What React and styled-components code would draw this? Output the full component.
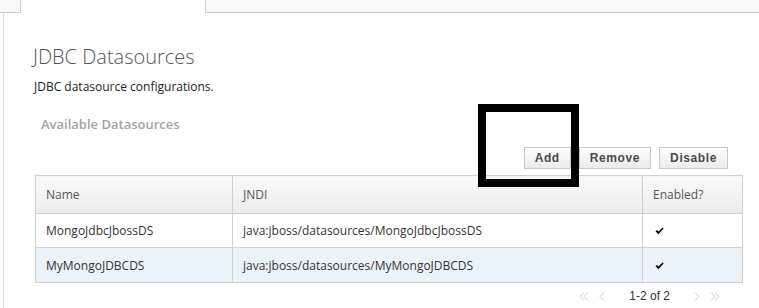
import React from 'react';
import styled, { createGlobalStyle } from 'styled-components';

const GlobalStyle = createGlobalStyle`
  html, body {
    margin: 0;
    padding: 0;
    background: #ffffff;
  }
  body {
    font-family: "Open Sans", "DejaVu Sans", sans-serif;
    color: #333;
  }
`;

const Page = styled.div`
  position: relative;
  width: 759px;
  height: 308px;
  overflow: hidden;
  background: #fff;
`;

const TabBar = styled.div`
  display: flex;
  height: 13px;
`;

const TabFiller = styled.div`
  flex: ${p => (p.$grow ? 1 : '0 0 auto')};
  width: ${p => (p.$grow ? 'auto' : '20px')};
  background: #f8f8f8;
  border-bottom: 1px solid #d0d0d0;
  box-sizing: border-box;
`;

const ActiveTab = styled.div`
  width: 186px;
  background: #fff;
  border-left: 1px solid #d0d0d0;
  border-right: 1px solid #d0d0d0;
  box-sizing: border-box;
`;

const Panel = styled.div`
  margin-left: 3px;
  border-left: 1px solid #dcdcdc;
  padding: 30px 17px 0 31px;
  height: 295px;
  box-sizing: border-box;
`;

const Title = styled.h1`
  margin: 0 0 0 -2px;
  font-size: 20px;
  line-height: 28px;
  font-weight: 300;
  color: #555;
`;

const Subtitle = styled.p`
  margin: 8px 0 0 -1px;
  font-size: 12px;
  line-height: 16px;
  color: #222;
`;

const SectionHeading = styled.h2`
  margin: 21px 0 0 6px;
  font-size: 13px;
  line-height: 16px;
  font-weight: 600;
  color: #a3a3a3;
`;

const Toolbar = styled.div`
  display: flex;
  justify-content: flex-end;
  gap: 8px;
  margin-top: 15px;
  padding-right: 14px;
`;

const Button = styled.button`
  height: 22px;
  padding: 0 ${p => p.$pad || 10}px;
  border: 1px solid #c8c8c8;
  background: linear-gradient(#fdfdfd, #ebebeb);
  font-family: "Liberation Sans", Arial, sans-serif;
  font-size: 12px;
  font-weight: bold;
  color: #4a4a4a;
  letter-spacing: 0.6px;
  cursor: pointer;
`;

const Table = styled.table`
  margin-top: 6px;
  width: 707px;
  border-collapse: collapse;
  table-layout: fixed;
  font-size: 12px;
`;

const HeadCell = styled.th`
  height: 37px;
  padding: 0 0 0 10px;
  text-align: left;
  font-weight: 400;
  color: #555;
  background: linear-gradient(#f9f9f9, #ececec);
  border: 1px solid #d1d1d1;
`;

const Row = styled.tr`
  background: ${p => (p.$alt ? '#ebf3fa' : '#ffffff')};
`;

const Cell = styled.td`
  height: ${p => p.$h || 33}px;
  padding: 0 0 0 ${p => p.$pl || 10}px;
  color: #333;
  border-left: 1px solid #d1d1d1;
  border-right: 1px solid #d1d1d1;
  border-bottom: 1px solid #d1d1d1;
`;

const Pager = styled.div`
  display: flex;
  justify-content: flex-end;
  align-items: center;
  gap: 10px;
  margin-top: 5px;
  padding-right: 22px;
  height: 16px;
  font-family: "Liberation Sans", Arial, sans-serif;
  font-size: 12px;
  color: #333;
`;

const PageInfo = styled.span`
  margin: 0 14px;
`;

const Annotation = styled.div`
  position: absolute;
  left: 478px;
  top: 104px;
  width: 101px;
  height: 83px;
  border: 8px solid #000;
  box-sizing: border-box;
  pointer-events: none;
`;

const Chevron = ({ double, dir }) => (
  <svg width={double ? 10 : 6} height="9" viewBox={double ? '0 0 10 9' : '0 0 6 9'}>
    {dir === 'left' ? (
      <g fill="none" stroke="#c8c8c8" strokeWidth="1">
        <polyline points="5,0.5 1,4.5 5,8.5" />
        {double && <polyline points="9,0.5 5,4.5 9,8.5" />}
      </g>
    ) : (
      <g fill="none" stroke="#c8c8c8" strokeWidth="1">
        <polyline points="1,0.5 5,4.5 1,8.5" />
        {double && <polyline points="5,0.5 9,4.5 5,8.5" />}
      </g>
    )}
  </svg>
);

const Check = () => (
  <svg width="9" height="8" viewBox="0 0 9 8">
    <path d="M0.5 4.2 L2 3 L3.4 4.6 L7.6 0.6 L8.6 1.4 L3.4 7.2 Z" fill="#000" />
  </svg>
);

const datasources = [
  { name: 'MongoJdbcJbossDS', jndi: 'java:jboss/datasources/MongoJdbcJbossDS', enabled: true },
  { name: 'MyMongoJDBCDS', jndi: 'java:jboss/datasources/MyMongoJDBCDS', enabled: true },
];

function App() {
  return (
    <Page>
      <GlobalStyle />
      <TabBar>
        <TabFiller />
        <ActiveTab />
        <TabFiller $grow />
      </TabBar>
      <Panel>
        <Title>JDBC Datasources</Title>
        <Subtitle>JDBC datasource configurations.</Subtitle>
        <SectionHeading>Available Datasources</SectionHeading>
        <Toolbar>
          <Button $pad={10}>Add</Button>
          <Button $pad={10}>Remove</Button>
          <Button $pad={10}>Disable</Button>
        </Toolbar>
        <Table>
          <colgroup>
            <col style={{ width: 197 }} />
            <col style={{ width: 410 }} />
            <col style={{ width: 100 }} />
          </colgroup>
          <thead>
            <tr>
              <HeadCell>Name</HeadCell>
              <HeadCell>JNDI</HeadCell>
              <HeadCell>Enabled?</HeadCell>
            </tr>
          </thead>
          <tbody>
            {datasources.map((ds, i) => (
              <Row key={ds.name} $alt={i % 2 === 1}>
                <Cell $h={i === 0 ? 33 : 34}>{ds.name}</Cell>
                <Cell $h={i === 0 ? 33 : 34}>{ds.jndi}</Cell>
                <Cell $h={i === 0 ? 33 : 34} $pl={12}>{ds.enabled && <Check />}</Cell>
              </Row>
            ))}
          </tbody>
        </Table>
        <Pager>
          <Chevron double dir="left" />
          <Chevron dir="left" />
          <PageInfo>1-2 of 2</PageInfo>
          <Chevron dir="right" />
          <Chevron double dir="right" />
        </Pager>
      </Panel>
      <Annotation />
    </Page>
  );
}

export default App;
